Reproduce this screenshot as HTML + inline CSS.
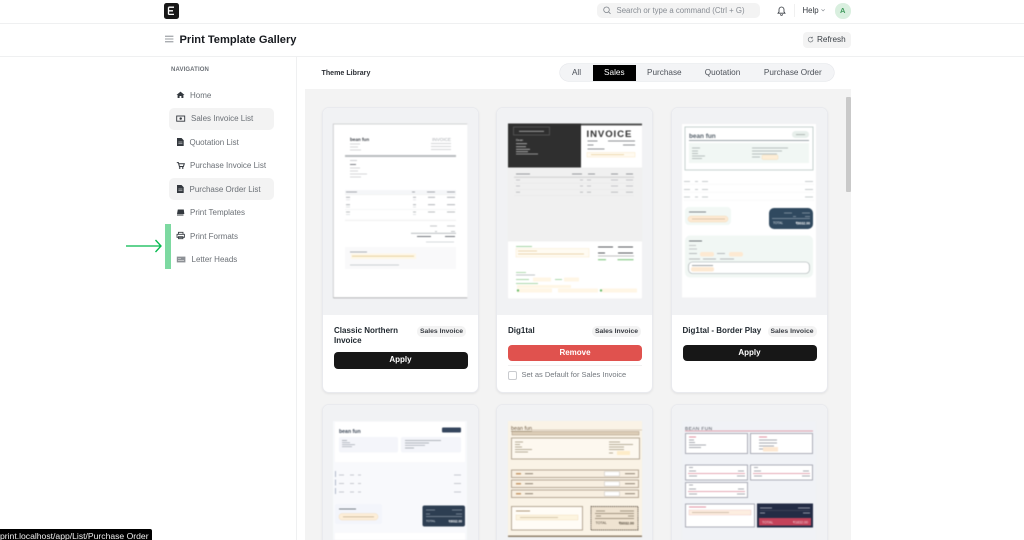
<!DOCTYPE html>
<html lang="en"><head><meta charset="utf-8"><title>Print Template Gallery</title>
<style>
html,body{margin:0;padding:0;width:1024px;height:540px;overflow:hidden;background:#fff;font-family:"Liberation Sans",sans-serif;color:#1f272e}
#w{position:absolute;left:0;top:0;width:1024px;height:540px;overflow:hidden;filter:blur(.3px)}
.a{position:absolute;white-space:nowrap}
.line{position:absolute;background:#eff0f1}
.nav{position:absolute;font-size:8px;color:#6b7076;white-space:nowrap;line-height:10px}
.hl{position:absolute;left:169px;width:105px;height:21.5px;background:#f3f3f3;border-radius:5px}
.tab{position:absolute;top:72.5px;font-size:8.2px;color:#4c5159;line-height:0;transform:translateX(-50%);white-space:nowrap}
.card{position:absolute;width:155px;background:#fff;border:1px solid #e9eaee;border-radius:7px;box-shadow:0 1px 2px rgba(0,0,0,.07);overflow:hidden}
.pv{position:absolute;left:0;top:0;right:0;background:#f1f2f4}
.ttl{position:absolute;font-size:8px;font-weight:bold;color:#1f272e;line-height:9.5px;white-space:nowrap}
.bdg{position:absolute;width:49px;height:11px;border-radius:5px;background:#f3f3f3;font-size:6.8px;font-weight:bold;color:#383c42;text-align:center;line-height:11px}
.btn{position:absolute;width:134px;height:16.5px;border-radius:4px;font-size:8px;font-weight:bold;color:#fff;text-align:center;line-height:16.5px}
svg{position:absolute;overflow:visible}
#pv{filter:blur(.55px)}
</style></head><body><div id="w">

<!-- top bar -->
<div class="line" style="left:0;top:23px;width:1024px;height:1px"></div>
<div class="a" style="left:163.5px;top:3px;width:15.5px;height:15.5px;background:#171717;border-radius:2.5px"></div>
<div class="a" style="left:597px;top:3px;width:163px;height:15px;background:#f3f3f3;border-radius:5px"></div>
<svg style="left:0;top:0" width="1024" height="60" viewBox="0 0 1024 60">
<path d="M168.5 7.2h5.5M168.5 7.2v7.3M168.5 10.8h4.5M168.5 14.4h5.5" stroke="#fff" stroke-width="1.3" fill="none"/>
<circle cx="606.5" cy="9.8" r="2.8" fill="none" stroke="#7c8188" stroke-width=".75"/><path d="M608.6 11.9l1.9 1.9" stroke="#7c8188" stroke-width=".75"/>
<path d="M778 13.2h7l-1-1.3V9.5a2.5 2.5 0 0 0-5 0v2.4zM780.4 14.2a1.1 1.1 0 0 0 2.2 0" fill="none" stroke="#33383f" stroke-width=".8"/>
<path d="M794.5 4v13" stroke="#eceded" stroke-width=".8"/>
<path d="M821.5 9.3l1.6 1.6 1.6-1.6" fill="none" stroke="#7c8188" stroke-width=".6"/>
<path d="M165 36.2h8.4M165 39h8.4M165 41.8h8.4" stroke="#777c82" stroke-width=".8"/>
</svg>
<div class="a" style="left:616.5px;top:5.5px;font-size:7.8px;line-height:10px;color:#878c93">Search or type a command (Ctrl + G)</div>
<div class="a" style="left:802.5px;top:5.5px;font-size:7.8px;line-height:10px;color:#33383f">Help</div>
<div class="a" style="left:835px;top:3px;width:15.5px;height:15.5px;border-radius:50%;background:#d9efdf;color:#3f9a5c;font-size:7.5px;font-weight:bold;text-align:center;line-height:15px">A</div>

<!-- page head -->
<div class="line" style="left:0;top:56px;width:1024px;height:1px"></div>
<div class="a" style="left:179.5px;top:32.5px;font-size:11.1px;font-weight:bold;line-height:14px;color:#171a1f">Print Template Gallery</div>
<div class="a" style="left:803px;top:32px;width:48px;height:16px;background:#f3f3f3;border-radius:4px"></div>
<svg style="left:0;top:0" width="1024" height="60" viewBox="0 0 1024 60"><path d="M813 39.7a2.4 2.4 0 1 1-.8-1.9M812.4 36.7v1.4h-1.4" fill="none" stroke="#6b7076" stroke-width=".65"/></svg>
<div class="a" style="left:817px;top:34.5px;font-size:8.2px;line-height:10px;color:#3a3f45">Refresh</div>

<!-- sidebar -->
<div class="line" style="left:296px;top:57px;width:1px;height:483px"></div>
<div class="a" style="left:171px;top:65.5px;font-size:6px;font-weight:bold;line-height:8px;color:#6b7076;letter-spacing:.12px">NAVIGATION</div>
<div class="hl" style="top:108px"></div>
<div class="hl" style="top:178px"></div>
<div class="nav" style="left:190px;top:90.5px">Home</div>
<div class="nav" style="left:191px;top:114px">Sales Invoice List</div>
<div class="nav" style="left:189.5px;top:137.5px">Quotation List</div>
<div class="nav" style="left:190px;top:161px">Purchase Invoice List</div>
<div class="nav" style="left:189.5px;top:184.5px">Purchase Order List</div>
<div class="nav" style="left:190px;top:208px">Print Templates</div>
<div class="nav" style="left:190px;top:231.5px">Print Formats</div>
<div class="nav" style="left:191.5px;top:255px">Letter Heads</div>
<svg style="left:0;top:0" width="300" height="300" viewBox="0 0 300 300">
<path d="M176.5 95l4-3.4 4 3.4h-1.1v3h-2v-2h-1.8v2h-2v-3z" fill="#33383e"/>
<rect x="176.7" y="116" width="8" height="5.2" fill="none" stroke="#33383e" stroke-width=".9"/><circle cx="180.7" cy="118.6" r="1.2" fill="#33383e"/>
<path d="M177 138h4.5l2.2 2.2v5.8H177z" fill="#33383e"/><path d="M178.4 142h4M178.4 143.8h4" stroke="#fff" stroke-width=".5"/>
<path d="M176.8 162.6h1.6l1 3.9h4l.9-2.8h-5.4" fill="none" stroke="#33383e" stroke-width="1"/><circle cx="179.7" cy="168" r=".85" fill="#33383e"/><circle cx="182.7" cy="168" r=".85" fill="#33383e"/>
<path d="M177 185h4.5l2.2 2.2v5.8H177z" fill="#33383e"/><path d="M178.4 189h4M178.4 190.8h4" stroke="#fff" stroke-width=".5"/>
<path d="M177.8 209.5h6l.5 4.5H177z" fill="#33383e"/><path d="M177 215h6.5" stroke="#33383e" stroke-width="1"/>
<path d="M178.4 233.9v-1.6h4.6v1.6M177 234.3h7.4v3H177zM178.5 236.7h4.4v2h-4.4z" fill="none" stroke="#33383e" stroke-width=".85"/>
<rect x="176.8" y="256.6" width="8.6" height="5.8" fill="#8d9196"/><path d="M178 258.5h3M178 260.4h6" stroke="#e6e6e6" stroke-width=".6"/>
</svg>
<div class="a" style="left:165px;top:224px;width:6px;height:45px;background:#7dd9a1"></div>
<svg style="left:0;top:0" width="300" height="300" viewBox="0 0 300 300"><path d="M126 246h34.5M155.5 240l5.5 6-5.5 6" fill="none" stroke="#05b94e" stroke-width="1.35"/></svg>

<!-- toolbar -->
<div class="a" style="left:321.5px;top:67.5px;font-size:7.1px;font-weight:bold;line-height:10px;color:#2b2f35">Theme Library</div>
<div class="a" style="left:560px;top:64px;width:274px;height:17px;background:#f3f4f6;border-radius:8.5px;box-shadow:0 0 0 .6px #e4e6ea"></div>
<div class="a" style="left:592.5px;top:65px;width:43.5px;height:15.5px;background:#000"></div>
<div class="tab" style="left:576.5px">All</div>
<div class="tab" style="left:614.3px;color:#fff">Sales</div>
<div class="tab" style="left:664.3px">Purchase</div>
<div class="tab" style="left:722.5px">Quotation</div>
<div class="tab" style="left:792.8px">Purchase Order</div>

<!-- gallery -->
<div class="a" style="left:305px;top:89px;width:546px;height:451px;background:#f3f3f3"></div>
<div class="a" style="left:845.5px;top:97px;width:5px;height:95px;background:#c9c9c9;border-radius:1px"></div>

<div class="card" style="left:322px;top:107px;height:284px"><div class="pv" style="height:207px"></div>
<div class="ttl" style="left:11px;top:218px">Classic Northern<br>Invoice</div><div class="bdg" style="left:94px;top:218px">Sales Invoice</div>
<div class="btn" style="left:10.5px;top:244px;background:#171717">Apply</div></div>

<div class="card" style="left:496px;top:107px;height:284px"><div class="pv" style="height:207px"></div>
<div class="ttl" style="left:11px;top:218px">Dig1tal</div><div class="bdg" style="left:95px;top:218px">Sales Invoice</div>
<div class="btn" style="left:11px;top:236.5px;background:#e0524e">Remove</div>
<div class="a" style="left:11px;top:257px;width:134px;height:1px;background:#f0f0f0"></div>
<div class="a" style="left:11px;top:263px;width:7px;height:7px;border:.8px solid #c9cbcf;border-radius:2px"></div>
<div class="a" style="left:24.5px;top:261.5px;font-size:7.5px;line-height:10px;color:#73787e">Set as Default for Sales Invoice</div></div>

<div class="card" style="left:671px;top:107px;height:284px"><div class="pv" style="height:207px"></div>
<div class="ttl" style="left:10.5px;top:218px">Dig1tal - Border Play</div><div class="bdg" style="left:95.5px;top:218px">Sales Invoice</div>
<div class="btn" style="left:10.5px;top:236.5px;background:#171717">Apply</div></div>

<div class="card" style="left:322px;top:404px;height:150px"><div class="pv" style="height:150px"></div></div>
<div class="card" style="left:496px;top:404px;height:150px"><div class="pv" style="height:150px"></div></div>
<div class="card" style="left:671px;top:404px;height:150px"><div class="pv" style="height:150px"></div></div>

<svg id="pv" style="left:0;top:0" width="1024" height="540" viewBox="0 0 1024 540" font-family="Liberation Sans, sans-serif">
<!-- P1 -->
<rect x="333.3" y="123.5" width="134" height="174.5" fill="#fff"/>
<path d="M333.3 298V124h134" fill="none" stroke="#c5c6c8" stroke-width=".8"/><path d="M333.3 297.8h134" stroke="#a9aaac" stroke-width=".9"/>
<text x="350" y="141" font-size="4.6" font-weight="bold" fill="#3b3f46">bean fun</text>
<text x="451" y="141" font-size="4.6" text-anchor="end" fill="#a8abb0">INVOICE</text>
<path d="M350 144h10M350 147h8M350 150h11M431 143.5h20M431 146.5h20M431 149.5h20" stroke="#c6c9cc" stroke-width=".8"/>
<rect x="345" y="155" width="111" height="2" fill="#b8bbbe"/>
<path d="M350 160.5h7" stroke="#c0c3c7" stroke-width=".8"/><path d="M350 164.5h6" stroke="#6b6f75" stroke-width=".9"/><path d="M350 168h10M350 171h8M350 174h17M350 177h11" stroke="#c6c9cc" stroke-width=".8"/>
<rect x="345" y="190" width="111" height="4.5" fill="#f5f6f8"/>
<path d="M346 192h11M412 192h3M427 192h8M447 192h8" stroke="#8a8e94" stroke-width=".8"/>
<path d="M345 194.7h111M345 209.5h111M345 220h111" stroke="#eceded" stroke-width=".5"/>
<path d="M346 197.3h4M413 197.3h3M428 197.3h7M447 197.3h8M346 204.7h4M413 204.7h3M428 204.7h7M447 204.7h8M346 212h4M413 212h3M428 212h7M447 212h8" stroke="#a5a9ad" stroke-width=".8"/>
<path d="M346 199.8h4M413 199.8h3M346 207h4M413 207h3M346 214.5h4M413 214.5h3" stroke="#d8dadd" stroke-width=".7"/>
<path d="M345 220.7h111" stroke="#eee" stroke-width=".5"/>
<path d="M430 226h7M447 226h8M435 231.5h2M451 231.5h4M411 233.3h45" stroke="#b0b4b8" stroke-width=".8"/>
<path d="M417 236.5h14M445 236.5h10" stroke="#6f7379" stroke-width="1"/><path d="M426 242h28" stroke="#c9ccd0" stroke-width=".7"/>
<rect x="345" y="247" width="111" height="22" fill="#f9f9fa"/>
<path d="M350 252h17" stroke="#93979d" stroke-width=".7"/><rect x="351" y="253.5" width="65" height="5.5" fill="#fef7e6"/><path d="M352 256.2h62" stroke="#e4cc95" stroke-width=".8"/>
<path d="M350 265h49" stroke="#bcc0c4" stroke-width=".8"/>
<!-- P2 -->
<rect x="508" y="123.5" width="134" height="175" fill="#fff" rx="1"/>
<rect x="508" y="123.5" width="73" height="44" fill="#2f2f2f"/><rect x="581" y="123.5" width="61" height="2" fill="#555"/>
<rect x="513.5" y="127" width="36" height="8" fill="none" stroke="#666" stroke-width=".6"/><path d="M519 131.3h25" stroke="#aaa" stroke-width=".8"/>
<text x="516" y="141" font-size="3" fill="#e8e8e8">Dean</text>
<path d="M516 143.7h11M516 146.7h10M516 149.3h14M516 151.7h12M516 154h22" stroke="#b5b5b5" stroke-width=".8"/>
<text x="586.5" y="137" font-size="9.6" font-weight="bold" fill="#2f2f2f" letter-spacing=".9">INVOICE</text>
<path d="M587.5 141h10M608 141h27M587.5 145h6M623 145h12M587.5 149h17" stroke="#6a6d71" stroke-width=".8"/>
<rect x="587" y="152.5" width="48" height="4.5" fill="#fffaf0" stroke="#f6e4bb" stroke-width=".4"/><path d="M591 154.7h33" stroke="#e3c68a" stroke-width=".7"/>
<rect x="508" y="167.5" width="134" height="74" fill="#f0f0f0"/>
<path d="M516 174h14M572 174h10M588 174h7M611 174h7M626 174h7" stroke="#7a7d82" stroke-width=".8"/>
<rect x="514" y="176.5" width="120" height="1.4" fill="#d8d8d8"/>
<path d="M516 180h4M580 180h3M587 180h4M611 180h7M626 180h7M516 186h4M580 186h3M587 186h4M611 186h7M626 186h7M516 192.2h4M580 192.2h3M587 192.2h4M611 192.2h7M626 192.2h7" stroke="#b5b7ba" stroke-width=".8"/>
<path d="M514 183.3h120M514 189.5h120M514 195.5h120" stroke="#e6e6e6" stroke-width=".5"/>
<path d="M516 246.5h16" stroke="#8fcb8f" stroke-width=".8"/>
<rect x="516" y="248.5" width="73" height="8.5" fill="#fffbf2" stroke="#f6e6c2" stroke-width=".4"/><path d="M518 251h19M518 254h66" stroke="#e3cc9a" stroke-width=".7"/>
<path d="M598 247h15M618 247h15M598 253h7M618 253h15" stroke="#55585d" stroke-width="1"/><path d="M598 256h36" stroke="#aaa" stroke-width=".7"/>
<path d="M598 259.7h8M617.5 259.7h16" stroke="#82c882" stroke-width="1.1"/>
<path d="M516 272.5h10" stroke="#8fcb8f" stroke-width=".7"/><path d="M516 275h19" stroke="#adb0b4" stroke-width=".7"/><path d="M516 279.5h13M555 279.5h7" stroke="#8fcb8f" stroke-width=".7"/><path d="M516 283.5h22" stroke="#8fcb8f" stroke-width=".7"/>
<rect x="533" y="277.5" width="18" height="4" fill="#fff6e5"/><rect x="564" y="277.5" width="15" height="4" fill="#fff6e5"/><rect x="517" y="285" width="54" height="3" fill="#fff6e5"/>
<rect x="517" y="288.5" width="35" height="4" fill="#fff6e5"/><rect x="558" y="288.5" width="40" height="4" fill="#fff6e5"/><rect x="602" y="288.5" width="35" height="4" fill="#fff6e5"/>
<circle cx="518" cy="290.5" r="1.2" fill="#6fbe6f"/><circle cx="601" cy="290.5" r="1.2" fill="#6fbe6f"/>
<!-- P3 -->
<rect x="682" y="124" width="134" height="173.5" fill="#fff"/>
<rect x="685" y="127" width="128" height="43" fill="none" stroke="#c6d2cf" stroke-width="1"/>
<text x="689" y="138" font-size="6.4" font-weight="bold" fill="#56616b">bean fun</text>
<rect x="792" y="131" width="17" height="7" rx="3.5" fill="#e7efeb"/><path d="M796 134.6h9" stroke="#9aa39f" stroke-width=".7"/>
<rect x="689" y="140" width="120" height="1" fill="#9aa3a8"/><rect x="689" y="143" width="120" height="20" fill="#f1f7f4"/>
<path d="M692 148h8M692 151h6M692 153.5h6M692 156h13M692 158.5h10M752 148h36M752 151h30M752 154h25M752 157h8" stroke="#a3adab" stroke-width=".7"/>
<rect x="762" y="155" width="16" height="4.5" rx="1" fill="#fdeed7" stroke="#efd2a0" stroke-width=".3"/>
<path d="M684 181.5h6M695 181.5h3M702 181.5h6M805 181.5h8M684 189.5h6M695 189.5h3M702 189.5h6M805 189.5h8M684 197h6M695 197h3M702 197h6M805 197h8" stroke="#b5babd" stroke-width=".8"/>
<path d="M684 184.3h130M684 192.3h130M684 200.3h130" stroke="#e3e5e6" stroke-width=".4" stroke-dasharray="1 .6"/>
<rect x="685" y="207" width="46" height="18" rx="4" fill="#f2f8f5"/><path d="M689 212h17" stroke="#7f858a" stroke-width=".9"/><rect x="688" y="216" width="40" height="6" rx="3" fill="#fde9d2" stroke="#efcea0" stroke-width=".3"/><path d="M692 219h33" stroke="#bba482" stroke-width=".6"/>
<rect x="769" y="208" width="44" height="21" rx="5" fill="#30495f"/><path d="M784 213h8M802 213h8M793 216.5h3M805 216.5h5M772 218.5h38" stroke="#b9c5cf" stroke-width=".6"/>
<text x="773" y="224" font-size="3.2" fill="#e7edf2">TOTAL</text><text x="810" y="224.3" font-size="3.4" font-weight="bold" text-anchor="end" fill="#fff">₹6032.00</text>
<rect x="685" y="235.5" width="128" height="42" rx="5" fill="#f1f7f4"/><path d="M689 241h13" stroke="#5e6469" stroke-width=".9"/><path d="M689 245.5h7M689 249h8" stroke="#b2b8b8" stroke-width=".7"/>
<path d="M689 253.5h8M717 253.5h8M689 259h11M703 259h13M720 259h14" stroke="#a1a7a8" stroke-width=".7"/>
<rect x="700" y="252" width="14" height="4.5" rx="2" fill="#fde9d2"/><rect x="729" y="252" width="14" height="4.5" rx="2" fill="#fde9d2"/>
<rect x="688.5" y="262" width="121" height="11.5" rx="4" fill="#fff" stroke="#9ea6a8" stroke-width=".6"/><path d="M692 265.5h21" stroke="#81878b" stroke-width=".7"/><rect x="691" y="267" width="23" height="4.5" rx="2" fill="#fde9d2"/>
<!-- P4 -->
<rect x="333" y="421" width="134" height="119" fill="#f8f9fc"/><rect x="335" y="422" width="130" height="40" fill="#fff"/>
<text x="339" y="433" font-size="5.2" font-weight="bold" fill="#3b4656">bean fun</text><rect x="442" y="427.5" width="19" height="5" rx="1" fill="#34455d"/>
<rect x="339" y="437" width="59" height="15.5" rx="2" fill="#f4f5fa"/><rect x="401" y="437" width="60" height="15.5" rx="2" fill="#f4f5fa"/>
<path d="M342 440.5h5M342 442.7h8M342 444.7h13M342 446.7h10M405 440.5h36M405 443h24M405 445.3h20M405 448h9" stroke="#989ea6" stroke-width=".7"/>
<path d="M335.5 471v6M335.5 479.5v6M335.5 488v6" stroke="#a9b3c6" stroke-width=".9"/>
<path d="M339 475h5M350 475h4M358 475h3M454 475h7M339 483.5h5M350 483.5h4M358 483.5h3M454 483.5h7M339 492h5M350 492h4M358 492h3M454 492h7" stroke="#b5b9c0" stroke-width=".8"/>
<rect x="335" y="504" width="47" height="20" rx="2" fill="#f3f5fb"/><path d="M339 509h17" stroke="#757c85" stroke-width=".9"/><rect x="339" y="513.5" width="39" height="6.5" rx="3" fill="#fdeed8" stroke="#eed2a6" stroke-width=".3"/><path d="M343 516.8h31" stroke="#b7a384" stroke-width=".6"/>
<rect x="422.5" y="505.5" width="42.5" height="21" rx="2" fill="#2d3e52"/><path d="M426 510h9M452 510h10M426 514h4M456 514h6M426 516.5h36" stroke="#b6c0cb" stroke-width=".6"/>
<text x="426" y="522" font-size="3" fill="#e8edf2">TOTAL</text><text x="462" y="522.5" font-size="3.2" font-weight="bold" text-anchor="end" fill="#fff">₹6032.00</text>
<rect x="335" y="533" width="130" height="7" fill="#fff"/>
<!-- P5 -->
<rect x="508" y="421" width="134" height="119" fill="#faf3e6"/>
<text x="511" y="430" font-size="5.4" fill="#6d5a43" text-decoration="underline">bean fun</text>
<path d="M531 430h111" stroke="#b8a58c" stroke-width=".6"/><rect x="512" y="431.5" width="127" height="3.5" fill="#dccdb7" stroke="#a7967f" stroke-width=".5"/>
<rect x="511.5" y="438" width="128" height="21" fill="#fdf8ef" stroke="#aea08e" stroke-width=".9"/>
<path d="M515 442h8M515 444.5h5M515 447h7M515 449.5h17M515 452h13M609 442h11M609 444.5h24M609 447h15M609 449.5h15M609 453h4" stroke="#a0957f" stroke-width=".7"/><rect x="617" y="451" width="13" height="4" fill="#fdecc8"/>
<g fill="#f8efe1" stroke="#aea08e" stroke-width=".9"><rect x="511.5" y="470" width="127" height="7.5"/><rect x="511.5" y="480" width="127" height="7.5"/><rect x="511.5" y="490" width="127" height="7.5"/></g>
<g fill="#fff" stroke="#b6b2aa" stroke-width=".4"><rect x="604.5" y="471.5" width="15" height="4.5"/><rect x="604.5" y="481.5" width="15" height="4.5"/><rect x="604.5" y="491.5" width="15" height="4.5"/></g>
<path d="M516 473.7h5M516 483.7h5M516 493.7h5" stroke="#c79a6a" stroke-width="1.5"/><path d="M525 473.7h8M525 483.7h8M525 493.7h8M625 473.7h10M625 483.7h10M625 493.7h10" stroke="#7f7362" stroke-width=".8"/>
<rect x="511.5" y="506.5" width="71" height="23.5" fill="#fffcf6" stroke="#aea08e" stroke-width=".9"/><path d="M516 511h14" stroke="#a78f6e" stroke-width=".9"/><rect x="516" y="515" width="62" height="5" fill="#fdf4df" stroke="#dfbf85" stroke-width=".3" stroke-dasharray="1 .5"/><path d="M520 517.5h38" stroke="#b09c7a" stroke-width=".6"/>
<rect x="591" y="506.5" width="47" height="23.5" fill="#efe3d1" stroke="#5c5144" stroke-width=".9" stroke-dasharray="1.2 .7"/>
<path d="M596 511h9M620 511h14M595 513.5h39M596 516h5M628 516h6M595 518.5h39" stroke="#8a7e6a" stroke-width=".7"/>
<text x="595.5" y="524" font-size="3.6" fill="#4e4436">TOTAL</text><text x="634" y="524.5" font-size="3.6" font-weight="bold" text-anchor="end" fill="#4e4436">₹6032.00</text>
<rect x="508" y="535.5" width="134" height="1.5" fill="#8f7f69"/><rect x="508" y="537" width="134" height="3" fill="#f1f2f4"/>
<!-- P6 -->
<rect x="682" y="421" width="134" height="119" fill="#f0f2f6"/>
<text x="685" y="430" font-size="4.8" fill="#4b4f58" letter-spacing=".4">BEAN FUN</text>
<rect x="685" y="430.5" width="128" height="1" fill="#dd9fab"/>
<g fill="#fff" stroke="#a3a6b0" stroke-width=".9"><rect x="685.5" y="433.5" width="62" height="20"/><rect x="750.5" y="433.5" width="62" height="20"/><rect x="685.5" y="465" width="62" height="15"/><rect x="750.5" y="465" width="62" height="15"/><rect x="685.5" y="482.5" width="62" height="15"/><rect x="685.5" y="504" width="69" height="23"/></g>
<path d="M689 437h7M759 437h8" stroke="#d66a80" stroke-width=".7"/><path d="M689 440h5M689 442.5h6M689 445h17M689 447.5h12M759 440h18M759 443h18M759 446h15M759 449h6" stroke="#8b8e97" stroke-width=".7"/><rect x="763" y="447" width="15" height="4.5" fill="#fde8d2"/>
<path d="M689 467.5h4M689 471h7M738 471h6M689 476h8M737 476h8M754 467.5h4M754 471h7M803 471h6M754 476h8M802 476h8M689 485h4M689 489h7M738 489h6M689 494h8M737 494h8" stroke="#8e919a" stroke-width=".7"/>
<path d="M688 473.5h57M753 473.5h57M688 491.5h57" stroke="#dd8b9c" stroke-width=".7"/>
<path d="M689 507h17" stroke="#d66a80" stroke-width=".7"/><rect x="689" y="510" width="62" height="5" fill="#fdeee0" stroke="#d88a98" stroke-width=".3" stroke-dasharray="1 .5"/><path d="M692 512.5h37" stroke="#a48e7a" stroke-width=".6"/>
<rect x="757" y="503.5" width="56" height="24" fill="#232c45"/><path d="M760 508h12M798 508h12M760 513h5M803 513h7" stroke="#b1b5c1" stroke-width=".7"/><path d="M760 510.5h50" stroke="#5a5f73" stroke-width=".4"/>
<rect x="759" y="518" width="52" height="7.5" fill="#c4425a"/>
<text x="762" y="523.5" font-size="3.6" fill="#f3d6dc">TOTAL</text><text x="808" y="523.5" font-size="3.6" text-anchor="end" fill="#f3d6dc">₹1832.00</text>
</svg>

<!-- tooltip -->
<div class="a" style="left:-1px;top:529px;width:153px;height:12px;background:#000;border-radius:0 2px 0 0;color:#f0f0f0;font-size:8.6px;line-height:14px;padding-left:1px;box-sizing:border-box">print.localhost/app/List/Purchase Order</div>
</div></body></html>
